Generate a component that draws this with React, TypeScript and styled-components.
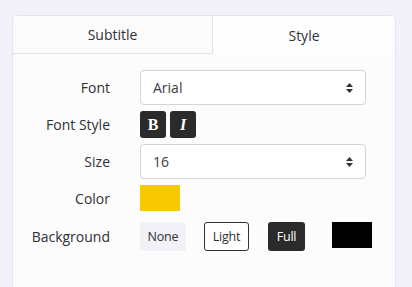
import styled, { createGlobalStyle } from 'styled-components';

const GlobalStyle = createGlobalStyle`
    body {
        margin: 0;
        background: #f3f2fb;
        font-family: "Open Sans", "Liberation Sans", sans-serif;
        color: #2f3136;
    }
`;

const Page = styled.div`
    padding: 15px 16px 0 12px;
    height: 287px;
    overflow: hidden;
    box-sizing: border-box;
`;

const Card = styled.div`
    width: 384px;
    min-height: 300px;
    box-sizing: border-box;
    background: #fcfcfd;
    border: 1px solid #e4e3ee;
    border-radius: 5px;
    overflow: hidden;
`;

const Tabs = styled.div`
    display: grid;
    grid-template-columns: 200px 1fr;
    height: 38px;
`;

const Tab = styled.div<{ $active?: boolean }>`
    display: flex;
    align-items: center;
    justify-content: center;
    font-size: 14px;
    color: #2f3136;
    background: ${p => (p.$active ? '#fefefe' : '#fbfbfc')};
    border-bottom: ${p => (p.$active ? 'none' : '1px solid #e2e2ea')};
    border-right: ${p => (p.$active ? 'none' : '1px solid #e2e2ea')};
`;

const Form = styled.div`
    display: grid;
    grid-template-columns: 97px 226px;
    column-gap: 30px;
    row-gap: 6px;
    align-items: center;
    padding: 16px 0 20px 0;
`;

const Label = styled.div<{ $spaced?: boolean }>`
    text-align: right;
    font-size: 14px;
    color: #2f3136;
    margin-top: ${p => (p.$spaced ? '5px' : '0')};
`;

const Select = styled.div`
    height: 35px;
    box-sizing: border-box;
    border: 1px solid #d3d3db;
    border-radius: 4px;
    background: #fff;
    display: flex;
    align-items: center;
    justify-content: space-between;
    padding: 0 11px 0 12px;
    font-size: 14px;
    color: #3a3c41;
`;

const Toggles = styled.div`
    display: flex;
    gap: 4px;
`;

const StyleButton = styled.div<{ $italic?: boolean }>`
    width: 26px;
    height: 27px;
    border-radius: 3px;
    background: #2b2b2b;
    color: #fff;
    display: flex;
    align-items: center;
    justify-content: center;
    font-family: "Liberation Serif", "DejaVu Serif", serif;
    font-weight: bold;
    font-style: ${p => (p.$italic ? 'italic' : 'normal')};
    font-size: 16px;
`;

const Swatch = styled.div<{ $color: string }>`
    flex-shrink: 0;
    width: 40px;
    height: 26px;
    background: ${p => p.$color};
`;

const BgRow = styled.div`
    display: flex;
    align-items: flex-start;
    gap: 18px;
    margin-top: 5px;
`;

const BgOption = styled.div<{ $variant: 'none' | 'light' | 'full'; $width: number }>`
    flex-shrink: 0;
    width: ${p => p.$width}px;
    height: 29px;
    box-sizing: border-box;
    display: flex;
    align-items: center;
    justify-content: center;
    font-size: 12.5px;
    letter-spacing: -0.2px;
    border-radius: 3px;
    background: ${p => (p.$variant === 'full' ? '#2b2b2b' : p.$variant === 'none' ? '#f1f1f7' : '#fff')};
    color: ${p => (p.$variant === 'full' ? '#fff' : '#2f3136')};
    border: ${p => (p.$variant === 'light' ? '1px solid #2f3136' : 'none')};
`;

const FullOption = styled(BgOption)`
    margin-left: 1px;
`;

const BlackSwatch = styled(Swatch)`
    margin-left: 9px;
`;

function SortIcon() {
    return (
        <svg width="9" height="12" viewBox="0 0 9 12">
            <path d="M4.5 1 L8 5 H1 Z" fill="#2f3136" />
            <path d="M4.5 11 L8 7 H1 Z" fill="#2f3136" />
        </svg>
    );
}

export default function App() {
    return (
        <Page>
            <GlobalStyle />
            <Card>
                <Tabs>
                    <Tab>Subtitle</Tab>
                    <Tab $active>Style</Tab>
                </Tabs>
                <Form>
                    <Label>Font</Label>
                    <Select>
                        Arial
                        <SortIcon />
                    </Select>

                    <Label>Font Style</Label>
                    <Toggles>
                        <StyleButton>B</StyleButton>
                        <StyleButton $italic>I</StyleButton>
                    </Toggles>

                    <Label>Size</Label>
                    <Select>
                        16
                        <SortIcon />
                    </Select>

                    <Label>Color</Label>
                    <Swatch $color="#f7c900" />

                    <Label $spaced>Background</Label>
                    <BgRow>
                        <BgOption $variant="none" $width={46}>None</BgOption>
                        <BgOption $variant="light" $width={45}>Light</BgOption>
                        <FullOption $variant="full" $width={37}>Full</FullOption>
                        <BlackSwatch $color="#000" />
                    </BgRow>
                </Form>
            </Card>
        </Page>
    );
}
